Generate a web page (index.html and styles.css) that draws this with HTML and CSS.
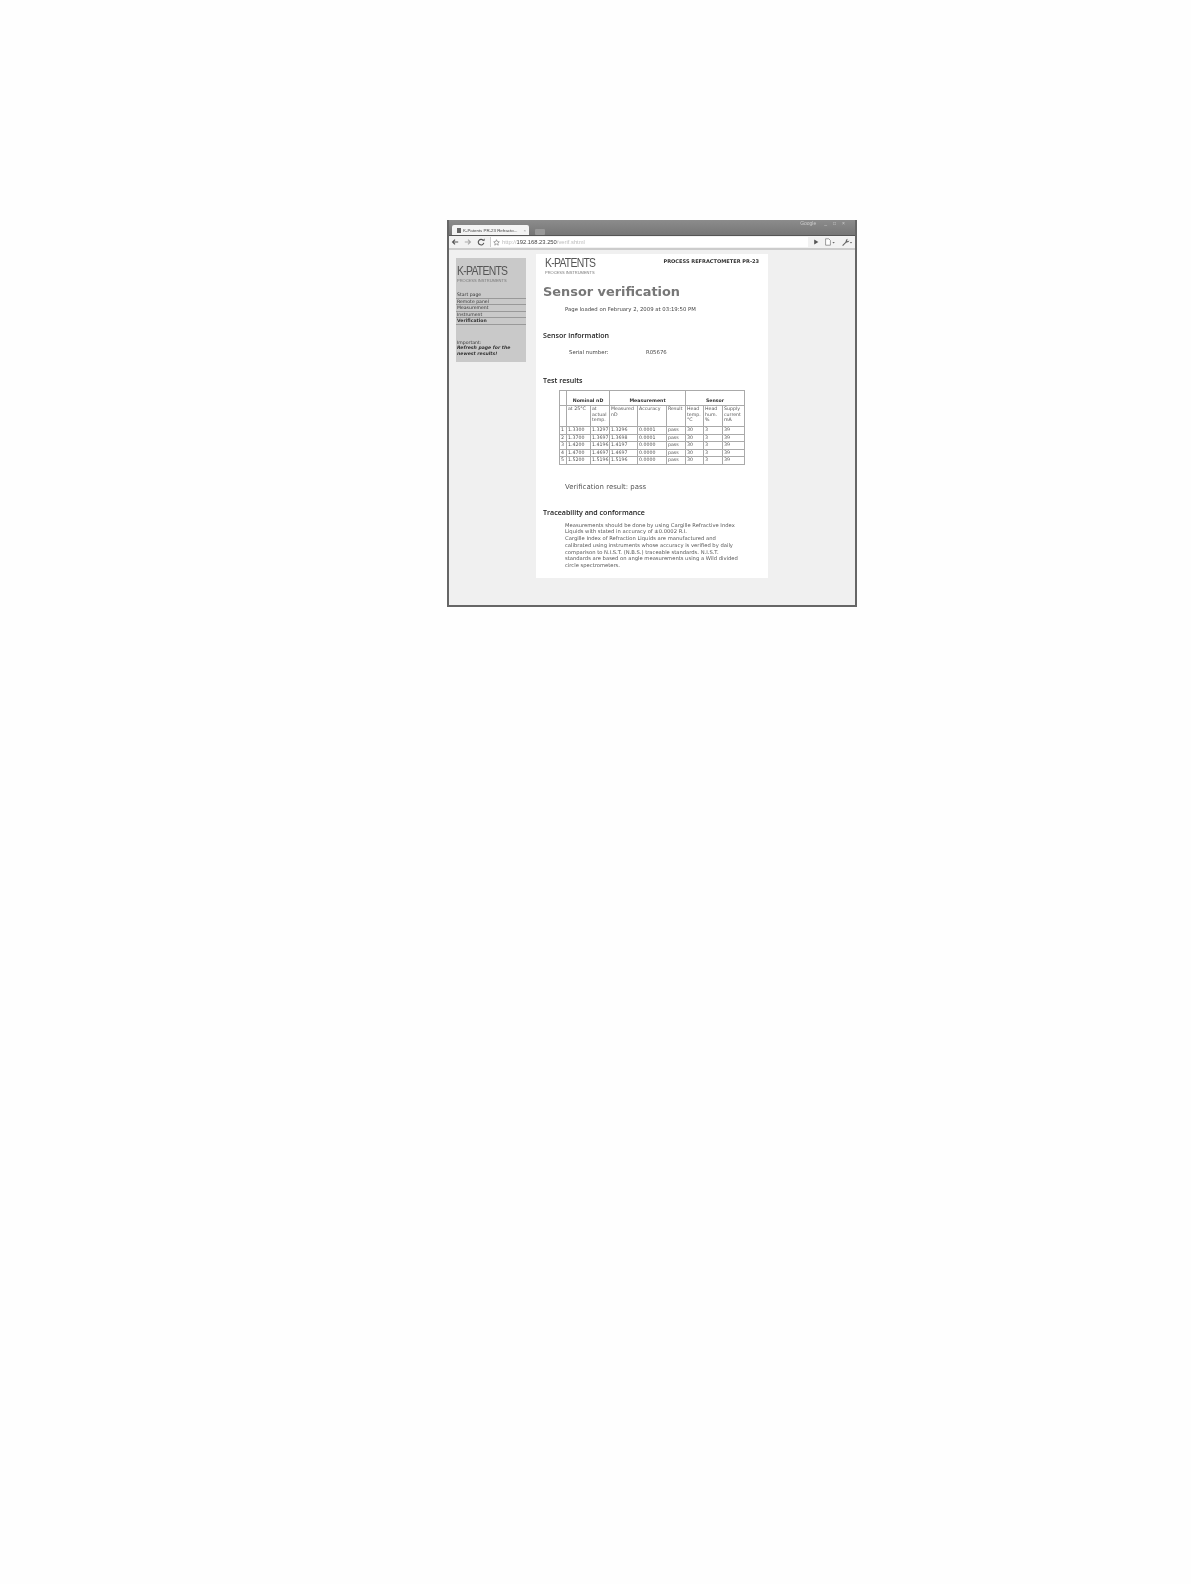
FILE: index.html
```html
<!DOCTYPE html>
<html lang="en">

<head>
    <meta charset="UTF-8">
    <title>Sensor verification</title>
    <link rel="stylesheet" href="styles.css">
</head>

<body>
    <div class="window">
        <div class="titlebar">
            <div class="tab">
                <span class="tab-icon"></span>
                <span class="tab-title">K-Patents PR-23 Refracto...</span>
                <span class="tab-close">×</span>
            </div>
            <div class="new-tab"></div>
            <div class="win-controls">
                <span class="google">Google</span>
                <span>_</span>
                <span>□</span>
                <span>×</span>
            </div>
        </div>

        <div class="toolbar">
            <svg class="tool" viewBox="0 0 10 10"><path d="M9 5H2M5 2L2 5l3 3" fill="none" stroke="#555" stroke-width="1.5"/></svg>
            <svg class="tool" viewBox="0 0 10 10"><path d="M1 5h7M5 2l3 3-3 3" fill="none" stroke="#aaa" stroke-width="1.5"/></svg>
            <svg class="tool" viewBox="0 0 10 10"><path d="M8 3.200A3.500 3.500 0 1 0 8.500 6" fill="none" stroke="#555" stroke-width="1.400"/><path d="M6.500 3.500H9.500V0.500z" fill="#555"/></svg>
            <div class="address">
                <svg class="star" viewBox="0 0 10 10"><path d="M5 1l1.200 2.700 2.800.3-2.100 1.900.6 2.900L5 7.300 2.500 8.800l.6-2.900L1 4l2.800-.3z" fill="none" stroke="#666" stroke-width=".8"/></svg>
                <span class="url-light">http://</span><span class="url-host">192.168.23.250</span><span class="url-light">/verif.shtml</span>
            </div>
            <svg class="tool small" viewBox="0 0 10 10"><path d="M2 1l7 4-7 4z" fill="#555"/></svg>
            <svg class="tool wide" viewBox="0 0 14 10"><path d="M1.500 1h4l2 2v6h-6z" fill="#fff" stroke="#666" stroke-width=".8"/><path d="M10 5h3l-1.500 2z" fill="#666"/></svg>
            <svg class="tool wide" viewBox="0 0 14 10"><path d="M1 9l4-4 1-3 2-1-1 2 1 1 2-1-1 2-3 1-4 4z" fill="#666"/><path d="M10.500 5h3l-1.500 2z" fill="#666"/></svg>
        </div>

        <div class="viewport">
            <aside class="sidebar">
                <div class="logo">K-PATENTS</div>
                <div class="logo-sub">PROCESS INSTRUMENTS</div>
                <ul class="menu">
                    <li>Start page</li>
                    <li>Remote panel</li>
                    <li>Measurement</li>
                    <li>Instrument</li>
                    <li class="active">Verification</li>
                </ul>
                <p class="note">Important:<br><em>Refresh page for the<br>newest results!</em></p>
            </aside>

            <main class="page">
                <div class="page-head">
                    <div>
                        <div class="logo">K-PATENTS</div>
                        <div class="logo-sub">PROCESS INSTRUMENTS</div>
                    </div>
                    <div class="product">PROCESS REFRACTOMETER PR-23</div>
                </div>

                <h1>Sensor verification</h1>
                <p class="indent loaded">Page loaded on February 2, 2009 at 03:19:50 PM</p>

                <h2 class="info-title">Sensor information</h2>
                <div class="serial">
                    <span>Serial number:</span>
                    <span>R05676</span>
                </div>

                <h2 class="test-title">Test results</h2>
                <table class="results">
                    <colgroup>
                        <col class="c-n"><col class="c-a"><col class="c-b"><col class="c-c"><col class="c-r">
                        <col class="c-d"><col class="c-f"><col class="c-d"><col class="c-e">
                    </colgroup>
                    <tr class="group">
                        <th></th>
                        <th colspan="2">Nominal nD</th>
                        <th colspan="3">Measurement</th>
                        <th colspan="3">Sensor</th>
                    </tr>
                    <tr class="heads">
                        <td></td>
                        <td>at 25°C</td>
                        <td>at actual temp.</td>
                        <td>Measured nD</td>
                        <td>Accuracy</td>
                        <td>Result</td>
                        <td>Head temp. °C</td>
                        <td>Head hum. %</td>
                        <td>Supply current mA</td>
                    </tr>
                    <tr><td>1</td><td>1.3300</td><td>1.3297</td><td>1.3296</td><td>0.0001</td><td>pass</td><td>30</td><td>3</td><td>39</td></tr>
                    <tr><td>2</td><td>1.3700</td><td>1.3697</td><td>1.3698</td><td>0.0001</td><td>pass</td><td>30</td><td>3</td><td>39</td></tr>
                    <tr><td>3</td><td>1.4200</td><td>1.4196</td><td>1.4197</td><td>0.0000</td><td>pass</td><td>30</td><td>3</td><td>39</td></tr>
                    <tr><td>4</td><td>1.4700</td><td>1.4697</td><td>1.4697</td><td>0.0000</td><td>pass</td><td>30</td><td>3</td><td>39</td></tr>
                    <tr><td>5</td><td>1.5200</td><td>1.5196</td><td>1.5196</td><td>0.0000</td><td>pass</td><td>30</td><td>3</td><td>39</td></tr>
                </table>

                <p class="indent verdict">Verification result: pass</p>

                <h2 class="trace-title">Traceability and conformance</h2>
                <p class="indent trace">
                    Measurements should be done by using Cargille Refractive Index<br>
                    Liquids with stated in accuracy of ±0.0002 R.I.<br>
                    Cargille Index of Refraction Liquids are manufactured and<br>
                    calibrated using instruments whose accuracy is verified by daily<br>
                    comparison to N.I.S.T. (N.B.S.) traceable standards. N.I.S.T.<br>
                    standards are based on angle measurements using a Wild divided<br>
                    circle spectrometers.
                </p>
            </main>
        </div>
    </div>
</body>

</html>
```

FILE: styles.css
```css
* {
    margin: 0;
    padding: 0;
    box-sizing: border-box;
}

body {
    background: #fefefe;
    min-height: 1584px;
    padding: 220px 0 0 447px;
    font-family: "DejaVu Sans", Verdana, sans-serif;
    color: #444;
    overflow: hidden;
}

/* Browser window */
.window {
    width: 410px;
    height: 387px;
    display: flex;
    flex-direction: column;
    border: 2px solid #666;
    border-top: none;
    filter: blur(0.4px);
}

.titlebar {
    height: 16px;
    flex: none;
    display: flex;
    align-items: flex-end;
    padding-left: 3px;
    background: linear-gradient(#8c8c8c, #767676);
    border-bottom: 1px solid #555;
}

.tab {
    width: 77px;
    height: 10px;
    display: flex;
    align-items: center;
    gap: 2px;
    padding: 0 3px 0 5px;
    background: #f4f4f4;
    border-radius: 2px 2px 0 0;
    font-family: "Liberation Sans", Arial, sans-serif;
    font-size: 4.400px;
    color: #444;
    white-space: nowrap;
}

.tab-icon {
    width: 4px;
    height: 5px;
    background: #666;
    flex: none;
}

.tab-title {
    flex: 1;
}

.tab-close {
    color: #999;
}

.new-tab {
    width: 10px;
    height: 6px;
    margin-left: 6px;
    background: #999;
    border-radius: 1px;
}

.win-controls {
    margin-left: auto;
    align-self: flex-start;
    display: flex;
    gap: 6px;
    padding: 0 10px 0 0;
    font-family: "Liberation Sans", Arial, sans-serif;
    font-size: 5px;
    color: #ccc;
}

.google {
    margin-right: 2px;
}

.toolbar {
    height: 14px;
    flex: none;
    display: flex;
    align-items: center;
    gap: 5px;
    padding: 0 2px;
    background: #f2f2f2;
    border-bottom: 2px solid #ccc;
}

.tool {
    width: 8px;
    height: 8px;
    flex: none;
}

.tool.small {
    width: 6px;
    height: 6px;
}

.tool.wide {
    width: 12px;
    height: 8px;
}

.address {
    flex: 1;
    height: 10px;
    display: flex;
    align-items: center;
    padding-left: 2px;
    background: #fff;
    border-left: 1px solid #ccc;
    font-family: "Liberation Sans", Arial, sans-serif;
    font-size: 5.800px;
}

.star {
    width: 7px;
    height: 7px;
    margin-right: 2px;
}

.url-light {
    color: #bbb;
}

.url-host {
    color: #444;
}

.viewport {
    flex: 1;
    display: flex;
    align-items: flex-start;
    padding: 4px 0 0 7px;
    background: #f0f0f0;
}

/* Left menu */
.sidebar {
    width: 70px;
    height: 104px;
    margin-top: 4px;
    padding-top: 7px;
    background: #c9c9c9;
}

.logo {
    width: 62px;
    font-family: "Liberation Sans", Arial, sans-serif;
    font-size: 13px;
    line-height: 11px;
    letter-spacing: -0.9px;
    color: #555;
    white-space: nowrap;
    transform: scaleX(0.8);
    transform-origin: left;
}

.logo-sub {
    margin-top: 1.500px;
    font-family: "Liberation Sans", Arial, sans-serif;
    font-size: 4px;
    line-height: 5px;
    color: #777;
}

.sidebar .logo {
    margin-left: 1px;
}

.sidebar .logo-sub {
    padding-left: 1px;
}

.menu {
    list-style: none;
    margin-top: 9.500px;
    font-size: 4.600px;
}

.menu li {
    height: 6.600px;
    line-height: 5.600px;
    padding-left: 1px;
    border-bottom: 1px solid #999;
    color: #333;
}

.menu .active {
    font-weight: bold;
}

.note {
    margin-top: 15px;
    padding-left: 1px;
    font-size: 4.600px;
    line-height: 5.300px;
    color: #333;
}

.note em {
    font-weight: bold;
}

/* Content */
.page {
    width: 232px;
    height: 324px;
    margin-left: 10px;
    padding: 3px 7px 0;
    background: #fff;
}

.page-head {
    height: 15px;
    display: flex;
    justify-content: space-between;
    padding-left: 2px;
}

.product {
    margin: 1px 2px 0 0;
    font-size: 5.050px;
    font-weight: bold;
    color: #333;
}

h1 {
    margin-top: 12px;
    font-size: 12.900px;
    line-height: 16px;
    color: #777;
}

h2 {
    font-family: "Open Sans", "DejaVu Sans", sans-serif;
    font-size: 7.100px;
    line-height: 9px;
    font-weight: 600;
    color: #222;
}

.indent {
    margin-left: 22px;
}

.loaded {
    margin-top: 6px;
    font-size: 5.350px;
    line-height: 6px;
}

.info-title {
    margin-top: 18.500px;
}

.serial {
    display: flex;
    margin: 9.500px 0 0 26px;
    font-size: 5.350px;
    line-height: 6px;
}

.serial span:first-child {
    width: 77px;
}

.test-title {
    margin-top: 20.500px;
}

/* Results table */
.results {
    margin: 5.500px 0 0 16px;
    width: 185px;
    table-layout: fixed;
    border-collapse: collapse;
    font-size: 4.700px;
    line-height: 5.500px;
    color: #555;
}

.c-n { width: 7px; }
.c-a { width: 24px; }
.c-b { width: 19px; }
.c-c { width: 28px; }
.c-r { width: 29px; }
.c-d { width: 19px; }
.c-f { width: 18px; }
.c-e { width: 22px; }

.results th,
.results td {
    border: 1px solid #aaa;
    padding: 0 1px;
    vertical-align: top;
    text-align: left;
    font-weight: normal;
}

.results .group th {
    height: 15px;
    padding-top: 7px;
    text-align: center;
    font-weight: bold;
    color: #333;
}

.results .heads td {
    height: 21px;
}

.results tr td {
    height: 7.500px;
}

.verdict {
    margin-top: 18.500px;
    font-size: 6.950px;
    line-height: 8px;
    color: #555;
}

.trace-title {
    margin-top: 17px;
}

.trace {
    margin-top: 4.500px;
    font-size: 5.220px;
    line-height: 6.800px;
    color: #555;
    white-space: nowrap;
}
```
